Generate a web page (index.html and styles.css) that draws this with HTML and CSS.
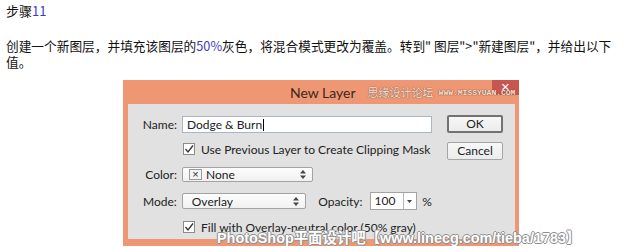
FILE: index.html
```html
<!DOCTYPE html>
<html>
<head>
	<meta charset="utf-8">
	<title>步骤11 - New Layer</title>
	<link rel="stylesheet" href="styles.css">
</head>
<body>
	<p class="step">步骤<span class="num">11</span></p>
	<p class="desc">创建一个新图层，并填充该图层的<span class="num">50%</span>灰色，将混合模式更改为覆盖。转到" 图层"&gt;"新建图层"，并给出以下值。</p>

	<div class="dialog">
		<div class="titlebar">
			<span class="title">New Layer</span>
			<span class="wm-cn">思缘设计论坛</span>
			<span class="wm-url">WWW.MISSYUAN.COM</span>
			<span class="close">&#215;</span>
		</div>
		<div class="panel">
			<div class="form">
				<div class="row row-name">
					<span class="label">Name:</span>
					<div class="text-input">Dodge &amp; Burn<span class="caret"></span></div>
				</div>
				<div class="row row-check1">
					<span class="checkbox">
						<svg width="10" height="10" viewBox="0 0 10 10"><path d="M1.5 5 L4 8 L9 1.5" fill="none" stroke="#333" stroke-width="1.3"/></svg>
					</span>
					<span class="check-text">Use Previous Layer to Create Clipping Mask</span>
				</div>
				<div class="row row-color">
					<span class="label">Color:</span>
					<div class="select select-color">
						<span class="x-box">&#215;</span>
						<span class="select-text">None</span>
						<svg class="arrows" width="6" height="9" viewBox="0 0 6 9"><path d="M0 3.5 L3 0 L6 3.5 Z M0 5.5 L3 9 L6 5.5 Z" fill="#444"/></svg>
					</div>
				</div>
				<div class="row row-mode">
					<span class="label">Mode:</span>
					<div class="select select-mode">
						<span class="select-text">Overlay</span>
						<svg class="arrows" width="6" height="9" viewBox="0 0 6 9"><path d="M0 3.5 L3 0 L6 3.5 Z M0 5.5 L3 9 L6 5.5 Z" fill="#444"/></svg>
					</div>
					<span class="opacity-label">Opacity:</span>
					<div class="opacity-box">
						<span class="opacity-val">100</span>
						<span class="opacity-drop">
							<svg width="5" height="3" viewBox="0 0 5 3"><path d="M0 0 L5 0 L2.5 3 Z" fill="#444"/></svg>
						</span>
					</div>
					<span class="percent">%</span>
				</div>
				<div class="row row-check2">
					<span class="checkbox">
						<svg width="10" height="10" viewBox="0 0 10 10"><path d="M1.5 5 L4 8 L9 1.5" fill="none" stroke="#333" stroke-width="1.3"/></svg>
					</span>
					<span class="check-text">Fill with Overlay-neutral color (50% gray)</span>
				</div>
			</div>
			<div class="buttons">
				<div class="btn btn-default">OK</div>
				<div class="btn">Cancel</div>
			</div>
		</div>
		<div class="stamp">PhotoShop平面设计吧【www.linecg.com/tieba/1783】</div>
	</div>
</body>
</html>
```

FILE: styles.css
```css
body
{
	margin: 0;
	padding: 3px 4px 0 6px;
	background: #fff;
	font-family: "Noto Sans CJK SC", sans-serif;
	font-size: 13px;
	color: #111;
}
p
{
	margin: 0;
	line-height: 16px;
}
.step
{
	margin-bottom: 19px;
}
.num
{
	color: #3b3bc8;
}
.desc
{
	width: 616px;
	font-size: 12.7px;
}

/* dialog */
.dialog
{
	position: relative;
	width: 387px;
	margin: 10px 0 0 117px;
	padding: 0 4px 7px 5px;
	background: #ef9773;
}
.titlebar
{
	position: relative;
	height: 24px;
	display: flex;
	align-items: center;
	padding-left: 162px;
	font-family: Lato, sans-serif;
}
.titlebar span
{
	flex-shrink: 0;
	white-space: nowrap;
}
.title
{
	font-size: 14px;
	color: #3a2820;
	position: relative;
	z-index: 1;
}
.wm-cn
{
	margin-left: 12px;
	font-family: "Noto Sans CJK SC", sans-serif;
	font-size: 11px;
	color: #fbe2d6;
	text-shadow: 0 0 1px #7a5244, 0 0 1px #7a5244;
	position: relative;
	z-index: 1;
}
.wm-url
{
	margin-left: 5px;
	font-family: "Liberation Mono", monospace;
	font-weight: bold;
	font-size: 8px;
	color: #fbe2d6;
	text-shadow: 0 0 1px #6a4438, 0 0 1px #6a4438;
	position: relative;
	z-index: 1;
}
.close
{
	position: absolute;
	top: 0;
	right: -4px;
	width: 27px;
	height: 15px;
	background: #c85650;
	color: #fff;
	font-family: "Liberation Sans", sans-serif;
	font-size: 15px;
	line-height: 14px;
	text-align: center;
}

.panel
{
	display: flex;
	height: 135px;
	background: #e1e1e1;
	font-family: Lato, sans-serif;
	font-size: 12px;
	color: #222;
}
.form
{
	width: 304px;
}
.row
{
	display: flex;
	align-items: center;
	white-space: nowrap;
}
.row-name
{
	margin-top: 12px;
	height: 17px;
}
.row-check1
{
	margin-top: 10px;
	height: 12px;
}
.row-color
{
	margin-top: 12px;
	height: 15px;
}
.row-mode
{
	margin-top: 10px;
	height: 18px;
}
.row-check2
{
	margin-top: 11px;
	height: 12px;
}
.label
{
	width: 49px;
	text-align: right;
	margin-right: 5px;
}
.text-input
{
	box-sizing: border-box;
	width: 250px;
	height: 17px;
	background: #fff;
	border: 1px solid #a7b6c6;
	padding-left: 4px;
	line-height: 15px;
	display: flex;
	align-items: center;
}
.caret
{
	display: inline-block;
	width: 1px;
	height: 12px;
	background: #000;
	margin-left: 1px;
}
.checkbox
{
	box-sizing: border-box;
	width: 12px;
	height: 12px;
	margin-left: 55px;
	background: #fff;
	border: 1px solid #8c8c8c;
	display: flex;
	align-items: center;
	justify-content: center;
}
.check-text
{
	margin-left: 6px;
}
.select
{
	box-sizing: border-box;
	position: relative;
	height: 15px;
	background: linear-gradient(#fdfdfd, #f1f1f1);
	border: 1px solid #a3a3a3;
	border-radius: 2px;
	display: flex;
	align-items: center;
}
.select-color
{
	width: 131px;
	padding-left: 6px;
}
.select-mode
{
	width: 125px;
	height: 16px;
	padding-left: 9px;
}
.arrows
{
	margin-left: auto;
	margin-right: 6px;
}
.x-box
{
	box-sizing: border-box;
	width: 13px;
	height: 11px;
	border: 1px solid #9a9a9a;
	background: #f4f4f4;
	font-family: "Liberation Sans", sans-serif;
	font-size: 11px;
	line-height: 9px;
	text-align: center;
	color: #333;
	margin-right: 4px;
}
.opacity-label
{
	margin-left: 12px;
}
.opacity-box
{
	box-sizing: border-box;
	display: flex;
	width: 48px;
	height: 18px;
	margin-left: 7px;
	background: #fff;
	border: 1px solid #a3a3a3;
}
.opacity-val
{
	width: 28px;
	padding-left: 4px;
	line-height: 16px;
	border-right: 1px solid #b5b5b5;
}
.opacity-drop
{
	flex: 1;
	display: flex;
	align-items: center;
	justify-content: center;
}
.percent
{
	margin-left: 5px;
}

.buttons
{
	margin-left: 15px;
	padding-top: 11px;
	display: flex;
	flex-direction: column;
	gap: 9px;
}
.btn
{
	box-sizing: border-box;
	width: 56px;
	height: 18px;
	border: 1px solid #a5a5a5;
	border-radius: 2px;
	background: linear-gradient(#f7f7f7, #ececec);
	text-align: center;
	line-height: 16px;
	font-size: 12px;
	color: #222;
}
.btn-default
{
	border: 2px solid #727272;
	line-height: 14px;
}

.stamp
{
	position: absolute;
	left: 94px;
	top: 146px;
	white-space: nowrap;
	font-family: "Liberation Sans", "Noto Sans CJK SC", sans-serif;
	font-weight: bold;
	font-size: 14.4px;
	color: #fff;
	text-shadow: 1px 0 0 #8e8e8e, -1px 0 0 #8e8e8e, 0 1px 0 #8e8e8e, 0 -1px 0 #8e8e8e;
}
```
